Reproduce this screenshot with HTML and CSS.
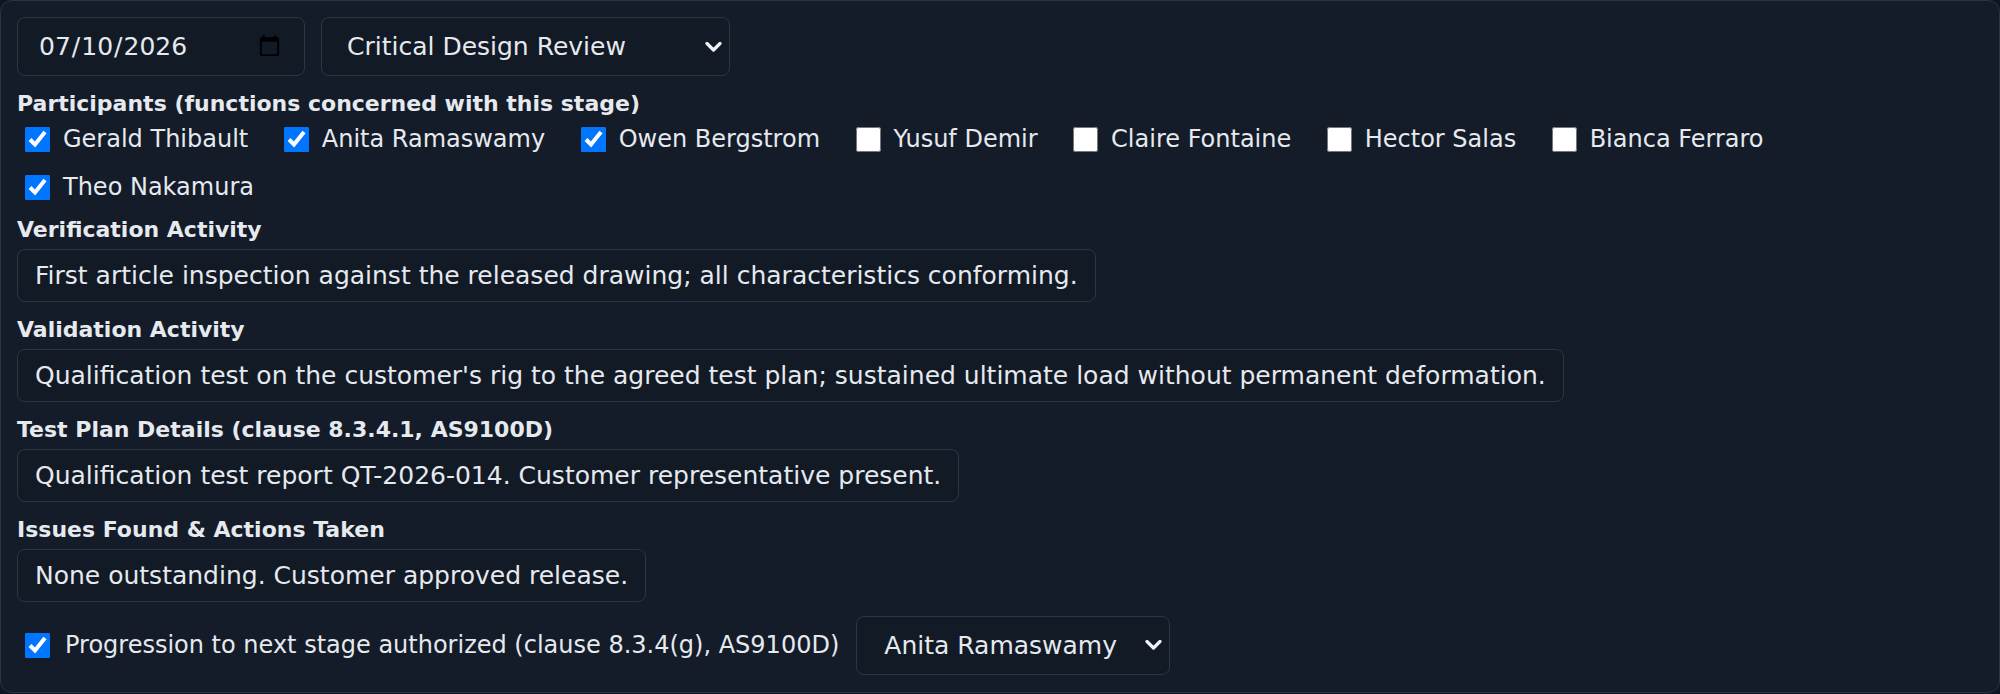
FILE: index.html
```html
<!DOCTYPE html>
<html lang="en">
<head>
<meta charset="utf-8">
<title>Stage Review</title>
<link rel="stylesheet" href="styles.css">
</head>
<body>
<div class="panel">
  <div class="top-row">
    <input class="ctl date-input" type="date" value="2026-07-10">
    <div class="select-wrap">
      <select class="ctl stage-select">
        <option>Preliminary Design Review</option>
        <option selected>Critical Design Review</option>
        <option>First Article Inspection</option>
      </select>
      <svg class="chev" width="17" height="11" viewBox="0 0 17 11" aria-hidden="true"><polyline points="2,2 8.5,8.5 15,2" fill="none" stroke="currentColor" stroke-width="3.2" stroke-linecap="round" stroke-linejoin="round"/></svg>
    </div>
  </div>

  <div class="label label-first">Participants (functions concerned with this stage)</div>
  <div class="participants">
    <label class="check"><input type="checkbox" checked><span>Gerald Thibault</span></label>
    <label class="check"><input type="checkbox" checked><span>Anita Ramaswamy</span></label>
    <label class="check"><input type="checkbox" checked><span>Owen Bergstrom</span></label>
    <label class="check"><input type="checkbox"><span>Yusuf Demir</span></label>
    <label class="check"><input type="checkbox"><span>Claire Fontaine</span></label>
    <label class="check"><input type="checkbox"><span>Hector Salas</span></label>
    <label class="check"><input type="checkbox"><span>Bianca Ferraro</span></label>
    <label class="check"><input type="checkbox" checked><span>Theo Nakamura</span></label>
  </div>

  <div class="label">Verification Activity</div>
  <div class="field">First article inspection against the released drawing; all characteristics conforming.</div>

  <div class="label">Validation Activity</div>
  <div class="field">Qualification test on the customer's rig to the agreed test plan; sustained ultimate load without permanent deformation.</div>

  <div class="label">Test Plan Details (clause 8.3.4.1, AS9100D)</div>
  <div class="field">Qualification test report QT-2026-014. Customer representative present.</div>

  <div class="label">Issues Found &amp; Actions Taken</div>
  <div class="field">None outstanding. Customer approved release.</div>

  <div class="auth-row">
    <label class="check auth-check"><input type="checkbox" checked><span>Progression to next stage authorized (clause 8.3.4(g), AS9100D)</span></label>
    <div class="select-wrap">
      <select class="ctl approver-select">
        <option selected>Anita Ramaswamy</option>
        <option>Gerald Thibault</option>
        <option>Owen Bergstrom</option>
      </select>
      <svg class="chev" width="17" height="11" viewBox="0 0 17 11" aria-hidden="true"><polyline points="2,2 8.5,8.5 15,2" fill="none" stroke="currentColor" stroke-width="3.2" stroke-linecap="round" stroke-linejoin="round"/></svg>
    </div>
  </div>
</div>
</body>
</html>
```

FILE: styles.css
```css
html, body {
  margin: 0;
  padding: 0;
  background: #0f1722;
}

body {
  font-family: "DejaVu Sans", "Liberation Sans", sans-serif;
  font-size: 25px;
  color: #e6e9ee;
}

.panel {
  box-sizing: border-box;
  height: 693px;
  background: #131c28;
  border: 1px solid #2a3447;
  border-radius: 12px;
  padding: 16px;
}

.top-row {
  display: flex;
  gap: 16px;
}

.ctl {
  font-family: "DejaVu Sans", "Liberation Sans", sans-serif;
  font-size: 25px;
  color: #e6e9ee;
  background: #121a26;
  border: 1px solid #2c3649;
  border-radius: 8px;
  box-sizing: border-box;
  height: 59px;
  margin: 0;
}

.date-input {
  width: 288px;
  padding: 0 20px;
}

.select-wrap {
  position: relative;
  display: inline-flex;
  color: #eef1f5;
}

select.ctl {
  appearance: none;
  -webkit-appearance: none;
}

.chev {
  position: absolute;
  right: 8px;
  top: 50%;
  transform: translateY(-50%);
  pointer-events: none;
}

.stage-select {
  width: 409px;
  padding: 0 30px 0 25px;
}

.approver-select {
  width: 314px;
  padding: 0 30px 0 27px;
}

.label {
  font-weight: bold;
  font-size: 22px;
  line-height: 25px;
  margin: 15px 0 7px;
}

.label-first {
  margin-top: 15px;
  margin-bottom: 9px;
}

.participants {
  display: flex;
  flex-wrap: wrap;
  column-gap: 27.5px;
  row-gap: 19px;
  margin-bottom: 4px;
  font-size: 24px;
}

.check {
  display: flex;
  align-items: center;
  gap: 13px;
  padding-left: 8px;
  line-height: 29px;
  font-size: 24px;
}

.check input {
  width: 25px;
  height: 25px;
  margin: 0;
}

.field {
  display: inline-block;
  border: 1px solid #2c3649;
  border-radius: 8px;
  background: #121a26;
  padding: 11px 17px;
  line-height: 29px;
}

.auth-row {
  display: flex;
  align-items: center;
  gap: 17px;
  margin-top: 13.5px;
}

.auth-check {
  gap: 15px;
}
```
